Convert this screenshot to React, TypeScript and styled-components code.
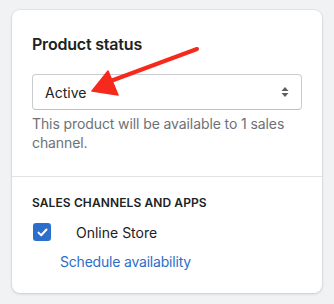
import styled, { createGlobalStyle } from 'styled-components';

const Global = createGlobalStyle`
  body {
    margin: 0;
    background: #f1f2f3;
    font-family: Inter, "Noto Sans", sans-serif;
    color: #202223;
  }
`;

const Page = styled.div`
  padding: 10px 12px 0 12px;
  width: 334px;
  height: 304px;
  box-sizing: border-box;
  position: relative;
`;

const Card = styled.div`
  background: #fff;
  border-radius: 8px;
  box-shadow: 0 0 0 1px rgba(63, 63, 68, 0.05), 0 1px 3px rgba(63, 63, 68, 0.18);
  width: 310px;
  overflow: hidden;
`;

const Section = styled.div<{ $pad: string }>`
  padding: ${(p: { $pad: string }) => p.$pad};
  display: flex;
  flex-direction: column;
`;

const Divider = styled.div`
  height: 1px;
  background: #e1e3e5;
`;

const Title = styled.h2`
  margin: 0 0 18px 0;
  font-size: 16px;
  line-height: 24px;
  font-weight: 600;
  letter-spacing: -0.2px;
`;

const SelectBox = styled.div`
  height: 36px;
  box-sizing: border-box;
  border: 1px solid #c9cccf;
  border-bottom-color: #babfc3;
  border-radius: 4px;
  display: flex;
  align-items: center;
  justify-content: space-between;
  padding: 0 12px 0 12px;
  font-size: 14px;
`;

const Help = styled.p`
  margin: 4px 0 0 0;
  font-size: 14px;
  line-height: 19px;
  letter-spacing: -0.1px;
  color: #6d7175;
`;

const Heading = styled.h3`
  margin: 0 0 12px 0;
  font-size: 12px;
  line-height: 16px;
  font-weight: 600;
  letter-spacing: 0.1px;
  text-transform: uppercase;
`;

const Row = styled.div`
  display: flex;
  align-items: center;
  gap: 25px;
  font-size: 14px;
`;

const Check = styled.span`
  width: 18px;
  height: 18px;
  margin-left: 1px;
  border-radius: 3px;
  background: #2c6ecb;
  display: flex;
  align-items: center;
  justify-content: center;
`;

const Link = styled.a`
  margin: 11px 0 0 28px;
  font-size: 14px;
  line-height: 20px;
  letter-spacing: -0.2px;
  color: #2c6ecb;
  text-decoration: none;
`;

const Arrow = styled.svg`
  position: absolute;
  left: 0;
  top: 0;
  pointer-events: none;
`;

export default function App() {
  return (
    <Page>
      <Global />
      <Card>
        <Section $pad="22px 20px 24px 20px">
          <Title>Product status</Title>
          <SelectBox>
            <span>Active</span>
            <svg width="8" height="12" viewBox="0 0 8 12">
              <path d="M4 1 L7.5 5 H0.5 Z M4 11 L0.5 7 H7.5 Z" fill="#5c5f62" />
            </svg>
          </SelectBox>
          <Help>This product will be available to 1 sales channel.</Help>
        </Section>
        <Divider />
        <Section $pad="18px 20px 21px 20px">
          <Heading>Sales channels and apps</Heading>
          <Row>
            <Check>
              <svg width="11" height="9" viewBox="0 0 11 9">
                <path d="M1.5 4.6 L4.2 7.2 L9.5 1.5" stroke="#fff" strokeWidth="2" fill="none" strokeLinecap="round" strokeLinejoin="round" />
              </svg>
            </Check>
            <span>Online Store</span>
          </Row>
          <Link href="#">Schedule availability</Link>
        </Section>
      </Card>
      <Arrow width="334" height="304" viewBox="0 0 334 304">
        <line x1="197" y1="49" x2="108" y2="82" stroke="#f52a1c" strokeWidth="4" strokeLinecap="round" />
        <path d="M92 91 L108 71 L118 95 Z" fill="#f52a1c" stroke="#f52a1c" strokeWidth="1.5" strokeLinejoin="round" />
      </Arrow>
    </Page>
  );
}
